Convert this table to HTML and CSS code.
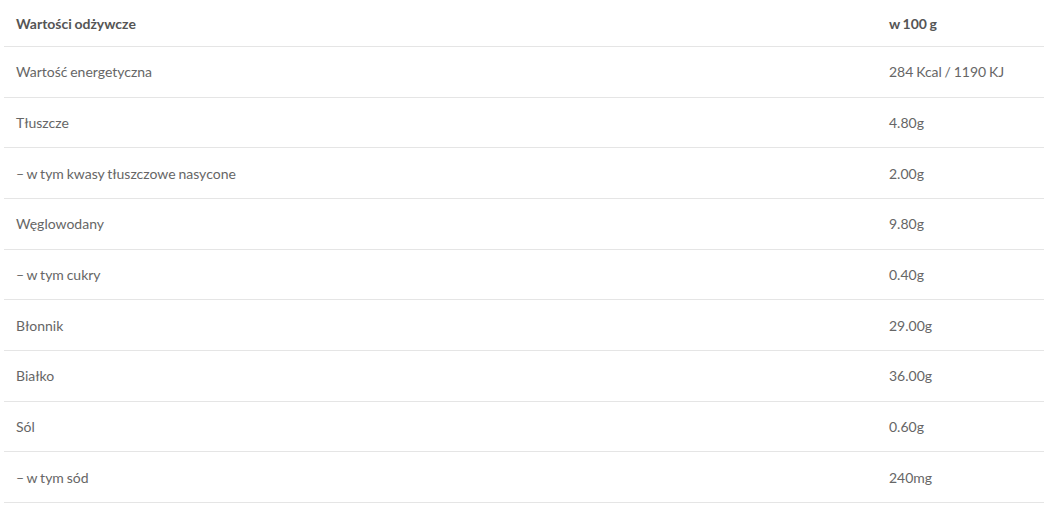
FILE: index.html
```html
<!DOCTYPE html>
<html lang="pl">
<head>
<meta charset="utf-8">
<link rel="stylesheet" href="styles.css">
</head>
<body>
<table class="nutri">
  <thead>
    <tr class="head"><th class="name">Wartości odżywcze</th><th class="val">w 100 g</th></tr>
  </thead>
  <tbody>
    <tr><td class="name">Wartość energetyczna</td><td class="val">284 Kcal / 1190 KJ</td></tr>
    <tr><td class="name">Tłuszcze</td><td class="val">4.80g</td></tr>
    <tr><td class="name">– w tym kwasy tłuszczowe nasycone</td><td class="val">2.00g</td></tr>
    <tr><td class="name">Węglowodany</td><td class="val">9.80g</td></tr>
    <tr><td class="name">– w tym cukry</td><td class="val">0.40g</td></tr>
    <tr><td class="name">Błonnik</td><td class="val">29.00g</td></tr>
    <tr><td class="name">Białko</td><td class="val">36.00g</td></tr>
    <tr><td class="name">Sól</td><td class="val">0.60g</td></tr>
    <tr><td class="name">– w tym sód</td><td class="val">240mg</td></tr>
  </tbody>
</table>
</body>
</html>
```
FILE: styles.css
```css
html, body {
  margin: 0;
  padding: 0;
  background: #fff;
}
body {
  padding-left: 4px;
  font-family: Lato, "Liberation Sans", sans-serif;
  font-size: 14px;
  color: #666;
}
.nutri {
  width: 1040px;
  border-collapse: collapse;
  table-layout: fixed;
}
.nutri th, .nutri td {
  text-align: left;
  padding: 0 12px;
  border-bottom: 1px solid #e5e5e5;
  vertical-align: middle;
  word-spacing: -0.8px;
}
.nutri .name { width: 849px; }
.nutri .head th {
  height: 46px;
  font-weight: 700;
  color: #555;
}
.nutri td {
  height: 49.67px;
}
```
